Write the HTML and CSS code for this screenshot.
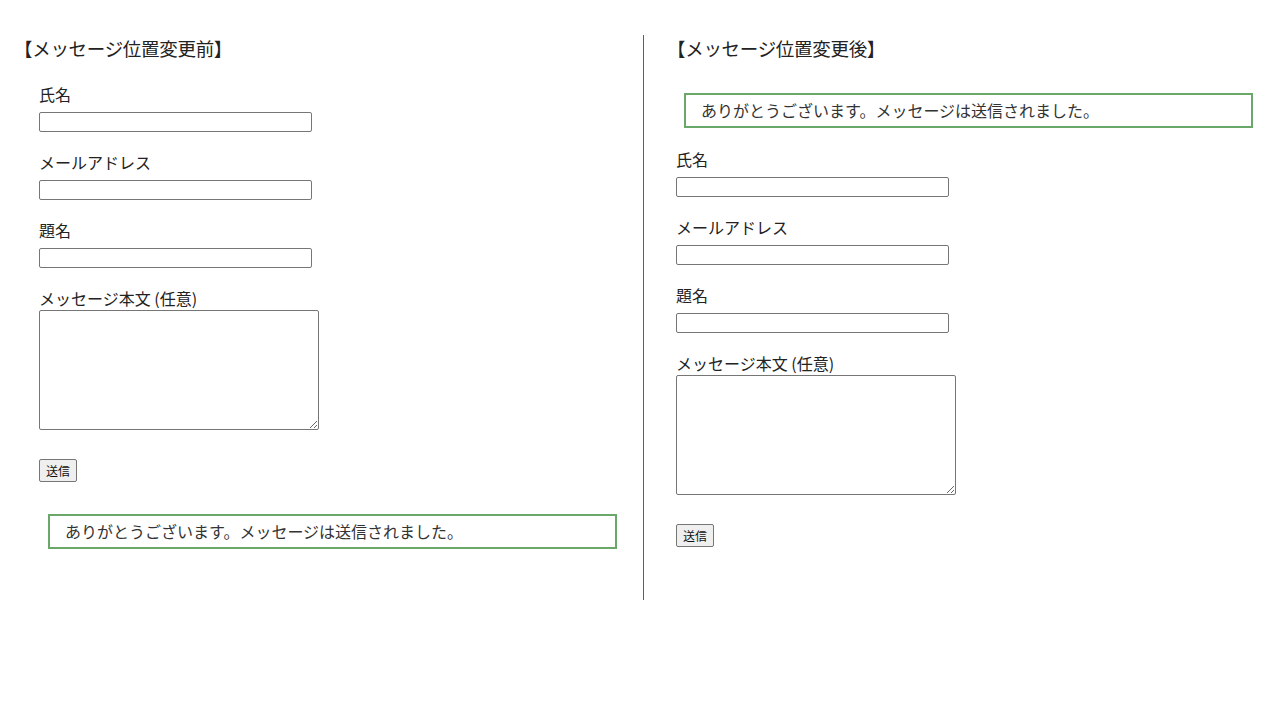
FILE: index.html
```html
<!DOCTYPE html>
<html lang="ja">
<head>
    <meta charset="UTF-8">
    <title>メッセージ位置変更</title>
    <link rel="stylesheet" href="styles.css">
</head>
<body>

<div class="compare">
    <!-- 変更前 -->
    <div class="pane pane-before">
        <h2 class="pane-title">【メッセージ位置変更前】</h2>
        <form class="contact-form">
            <div class="field">
                <label>氏名</label>
                <input type="text">
            </div>
            <div class="field">
                <label>メールアドレス</label>
                <input type="email">
            </div>
            <div class="field">
                <label>題名</label>
                <input type="text">
            </div>
            <div class="field field-area">
                <label>メッセージ本文 (任意)</label>
                <textarea></textarea>
            </div>
            <button type="button" class="submit">送信</button>
        </form>
        <div class="sent-msg">ありがとうございます。メッセージは送信されました。</div>
    </div>

    <!-- 変更後 -->
    <div class="pane pane-after">
        <h2 class="pane-title">【メッセージ位置変更後】</h2>
        <div class="sent-msg">ありがとうございます。メッセージは送信されました。</div>
        <form class="contact-form">
            <div class="field">
                <label>氏名</label>
                <input type="text">
            </div>
            <div class="field">
                <label>メールアドレス</label>
                <input type="email">
            </div>
            <div class="field">
                <label>題名</label>
                <input type="text">
            </div>
            <div class="field field-area">
                <label>メッセージ本文 (任意)</label>
                <textarea></textarea>
            </div>
            <button type="button" class="submit">送信</button>
        </form>
    </div>
</div>

</body>
</html>
```

FILE: styles.css
```css
body {
    margin: 0;
    background: #fff;
    color: #222;
    font-family: "Noto Sans CJK JP", "Noto Sans", sans-serif;
}
.compare {
    display: flex;
    padding-top: 35px;
}
.pane {
    width: 644px;
    height: 565px;
    box-sizing: border-box;
}
.pane-before {
    border-right: 1px solid #4f5f8f;
    padding-left: 14px;
}
.pane-after {
    width: 636px;
    padding-left: 23px;
}
.pane-title {
    margin: 0;
    font-size: 18.5px;
    font-weight: normal;
    line-height: 26px;
    letter-spacing: -0.3px;
}
.contact-form {
    padding-left: 25px;
    margin-top: 22px;
}
.pane-after .contact-form {
    padding-left: 9px;
    margin-top: 20px;
}
.field {
    margin-bottom: 19px;
}
.field label {
    display: block;
    font-size: 16px;
    line-height: 22px;
    margin-bottom: 7px;
}
.field input {
    display: block;
    width: 273px;
    height: 20px;
    box-sizing: border-box;
    border: 1px solid #767676;
    border-radius: 2px;
    margin: 0;
}
.field-area {
    margin-bottom: 29px;
}
.field-area label {
    margin-bottom: 1px;
}
.field textarea {
    display: block;
    width: 280px;
    height: 120px;
    box-sizing: border-box;
    border: 1px solid #767676;
    border-radius: 2px;
    margin: 0;
}
.submit {
    display: block;
    width: 38px;
    height: 23px;
    padding: 0;
    font-family: "Noto Sans CJK JP", sans-serif;
    font-size: 12px;
    color: #111;
    background: #efefef;
    border: 1px solid #767676;
    border-radius: 2px;
}
.sent-msg {
    width: 569px;
    height: 35px;
    box-sizing: border-box;
    border: 2px solid #6aa86a;
    padding-left: 15px;
    font-size: 16px;
    line-height: 31px;
    color: #333;
}
.pane-before .sent-msg {
    margin: 32px 0 0 34px;
}
.pane-after .sent-msg {
    margin: 32px 0 0 17px;
}
```
